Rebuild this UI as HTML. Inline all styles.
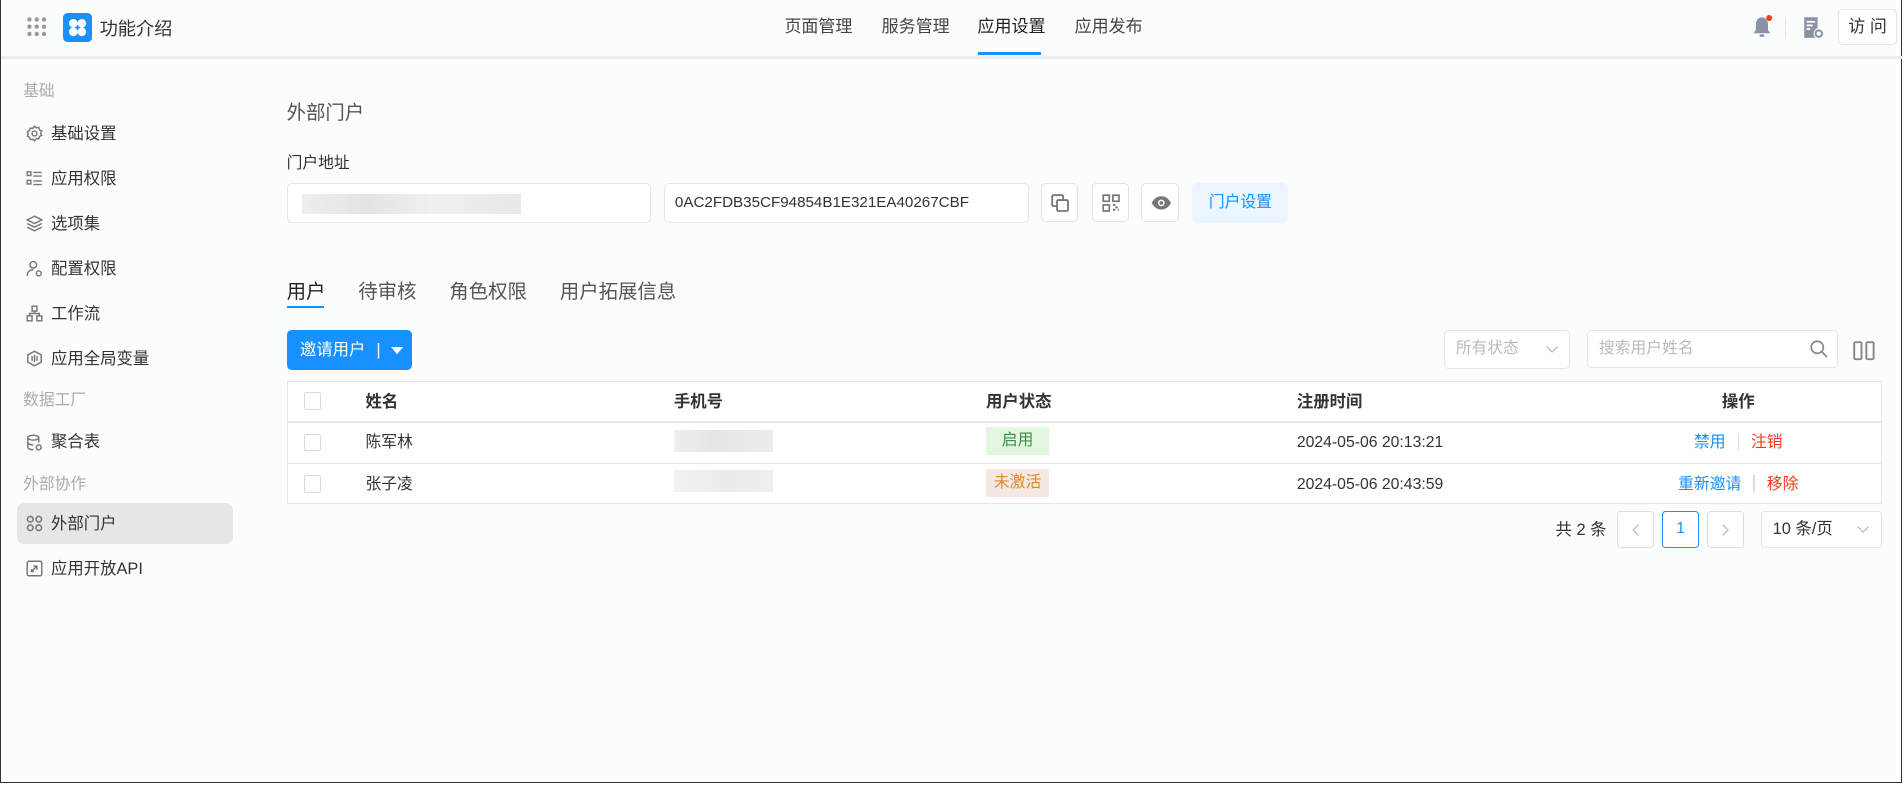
<!DOCTYPE html>
<html><head><meta charset="utf-8">
<style>
html,body{margin:0;padding:0;}
html{zoom:1.2143;}
body{width:1568px;height:646px;position:relative;overflow:hidden;background:#fbfdfd;font-family:"Liberation Sans","Noto Sans CJK SC",sans-serif;color:#333;line-height:1.34;}
.a{position:absolute;white-space:nowrap;}
.frame{position:absolute;left:0;top:0;width:1565px;height:644px;border:1px solid #333;border-top:none;}
.nav{font-size:14px;color:#444;top:13px;}
.side{font-size:13.5px;color:#333;left:42px;}
.sec{font-size:13px;color:#aaa;left:19px;}
.ico{position:absolute;left:21px;}
.ibtn{position:absolute;top:151px;width:31px;height:32px;border:1px solid #e3e3e3;border-radius:4px;background:#fff;box-sizing:border-box;}
.th{font-size:13.5px;font-weight:bold;color:#333;top:323px;}
.td{font-size:13px;color:#333;}
.cb{position:absolute;left:250px;width:13px;height:13px;border:1px solid #d9d9d9;background:#fff;border-radius:2px;}
</style></head><body>
<div class="frame"></div>
<!-- header -->
<svg class="a" style="left:22px;top:14px" width="16" height="16" viewBox="0 0 16 16" fill="#999"><circle cx="2" cy="2" r="1.8"/><circle cx="8" cy="2" r="1.8"/><circle cx="14" cy="2" r="1.8"/><circle cx="2" cy="8" r="1.8"/><circle cx="8" cy="8" r="1.8"/><circle cx="14" cy="8" r="1.8"/><circle cx="2" cy="14" r="1.8"/><circle cx="8" cy="14" r="1.8"/><circle cx="14" cy="14" r="1.8"/></svg>
<svg class="a" style="left:52px;top:11px" width="24" height="24" viewBox="0 0 24 24"><rect width="24" height="24" rx="4" fill="#1890ff"/><g fill="#fff"><ellipse cx="8.5" cy="8.5" rx="3.6" ry="3.6"/><ellipse cx="15.5" cy="8.5" rx="3.6" ry="3.6"/><ellipse cx="8.5" cy="15.5" rx="3.6" ry="3.6"/><ellipse cx="15.5" cy="15.5" rx="3.6" ry="3.6"/></g></svg>
<div class="a" style="left:82px;top:14px;font-size:15px;color:#333">功能介绍</div>
<div class="a nav" style="left:646px">页面管理</div>
<div class="a nav" style="left:726px">服务管理</div>
<div class="a nav" style="left:805px;color:#222">应用设置</div>
<div class="a" style="left:805px;top:43px;width:52px;height:2px;background:#1890ff"></div>
<div class="a nav" style="left:885px">应用发布</div>
<svg class="a" style="left:1442px;top:12px" width="18" height="20" viewBox="0 0 18 20"><path d="M9 2c-3 0-5 2.5-5 5.5v5L2 15h14l-2-2.5v-5C14 4.5 12 2 9 2z" fill="#8a93a5"/><rect x="7" y="16" width="4" height="2" rx="1" fill="#8a93a5"/><circle cx="15" cy="2.5" r="2.5" fill="#f5401c"/></svg>
<div class="a" style="left:1470px;top:14px;width:1px;height:18px;background:#e5e5e5"></div>
<svg class="a" style="left:1485px;top:13px" width="17" height="19" viewBox="0 0 17 19"><path d="M1 1h11v9a5 5 0 0 0-2 8H1z" fill="#8a93a5"/><rect x="3" y="4" width="7" height="1.5" fill="#fff"/><rect x="3" y="7" width="5" height="1.5" fill="#fff"/><rect x="3" y="10" width="3" height="1.5" fill="#fff"/><circle cx="13" cy="14.5" r="3.5" fill="#8a93a5"/><circle cx="13" cy="14.5" r="1.8" fill="#fff"/></svg>
<div class="a" style="left:1514px;top:7px;width:48px;height:30px;border:1px solid #e5e5e5;border-radius:4px;box-sizing:border-box;background:#fff;font-size:14px;text-align:center;line-height:28px;color:#333">访 问</div>
<div class="a" style="left:1px;top:46px;width:1565px;height:3px;background:#ececec"></div>
<!-- sidebar -->
<div class="a sec" style="top:67px">基础</div>
<svg class="ico" style="top:103px" width="14" height="14" viewBox="0 0 14 14" fill="none" stroke="#777" stroke-width="1.2"><circle cx="7" cy="7" r="2"/><path d="M7 1l1.5 1.3 2-.3.6 1.9 1.8 1-.8 1.8.8 1.8-1.8 1-.6 1.9-2-.3L7 13l-1.5-1.3-2 .3-.6-1.9-1.8-1 .8-1.8-.8-1.8 1.8-1 .6-1.9 2 .3z"/></svg>
<div class="a side" style="top:102px">基础设置</div>
<svg class="ico" style="top:140px" width="14" height="14" viewBox="0 0 14 14" fill="none" stroke="#777" stroke-width="1.2"><rect x="1" y="1.5" width="3" height="3"/><rect x="1" y="8.5" width="3" height="3"/><path d="M6 2h7M6 5h7M6 9h7M6 12h7"/></svg>
<div class="a side" style="top:139px">应用权限</div>
<svg class="ico" style="top:177px" width="14" height="14" viewBox="0 0 14 14" fill="none" stroke="#777" stroke-width="1.2"><path d="M7 1L1 4l6 3 6-3z M1 7l6 3 6-3 M1 10l6 3 6-3"/></svg>
<div class="a side" style="top:176px">选项集</div>
<svg class="ico" style="top:214px" width="14" height="14" viewBox="0 0 14 14" fill="none" stroke="#777" stroke-width="1.2"><circle cx="6" cy="4" r="2.7"/><path d="M1 13c0-3 2-5 5-5"/><circle cx="10.5" cy="11" r="2"/></svg>
<div class="a side" style="top:213px">配置权限</div>
<svg class="ico" style="top:251px" width="14" height="14" viewBox="0 0 14 14" fill="none" stroke="#777" stroke-width="1.2"><rect x="5" y="1" width="4" height="4"/><rect x="1" y="9" width="4" height="4"/><rect x="9" y="9" width="4" height="4"/><path d="M7 5v2M3 9V7h8v2"/></svg>
<div class="a side" style="top:250px">工作流</div>
<svg class="ico" style="top:288px" width="14" height="14" viewBox="0 0 14 14" fill="none" stroke="#777" stroke-width="1.2"><path d="M7 1l5.5 3v6L7 13 1.5 10V4z"/><path d="M5 5v4M7 4v6M9 5v4"/></svg>
<div class="a side" style="top:287px">应用全局变量</div>
<div class="a sec" style="top:321px">数据工厂</div>
<svg class="ico" style="top:357px" width="14" height="14" viewBox="0 0 14 14" fill="none" stroke="#777" stroke-width="1.2"><ellipse cx="6" cy="3" rx="4.5" ry="2"/><path d="M1.5 3v8c0 1 2 2 4.5 2M10.5 3v4M1.5 7c0 1 2 2 4.5 2"/><circle cx="10.5" cy="11" r="2"/></svg>
<div class="a side" style="top:356px">聚合表</div>
<div class="a sec" style="top:390px">外部协作</div>
<div class="a" style="left:14px;top:414px;width:178px;height:34px;background:#e6e6e6;border-radius:6px"></div>
<svg class="ico" style="top:424px" width="14" height="14" viewBox="0 0 14 14" fill="none" stroke="#777" stroke-width="1.3"><circle cx="3.5" cy="3.5" r="2.3"/><circle cx="10.5" cy="3.5" r="2.3"/><circle cx="3.5" cy="10.5" r="2.3"/><circle cx="10.5" cy="10.5" r="2.3"/></svg>
<div class="a side" style="top:423px">外部门户</div>
<svg class="ico" style="top:461px" width="14" height="14" viewBox="0 0 14 14" fill="none" stroke="#777" stroke-width="1.2"><rect x="1" y="1" width="12" height="12" rx="1.5"/><path d="M5 9l4-4M6 5h3v3M4.5 7.5v2h2"/></svg>
<div class="a side" style="top:460px">应用开放API</div>
<!-- main -->
<div class="a" style="left:236px;top:82px;font-size:16px;color:#555">外部门户</div>
<div class="a" style="left:236px;top:126px;font-size:13px;color:#333">门户地址</div>
<div class="a" style="left:236px;top:151px;width:300px;height:33px;border:1px solid #e6e6e6;border-radius:4px;box-sizing:border-box;background:#fff"></div>
<div class="a" style="left:249px;top:160px;width:180px;height:16px;background:linear-gradient(90deg,#eee,#e4e4e4 30%,#f0f0f0 60%,#e8e8e8)"></div>
<div class="a" style="left:547px;top:151px;width:300px;height:33px;border:1px solid #e6e6e6;border-radius:4px;box-sizing:border-box;background:#fff;font-size:12.5px;line-height:31px;padding-left:8px;color:#333">0AC2FDB35CF94854B1E321EA40267CBF</div>
<div class="ibtn" style="left:857px"><svg style="position:absolute;left:8px;top:8px" width="15" height="15" viewBox="0 0 15 15" fill="none" stroke="#777" stroke-width="1.5"><rect x="1" y="1" width="9" height="9" rx="1"/><rect x="5" y="5" width="9" height="9" rx="1" fill="#fff"/></svg></div>
<div class="ibtn" style="left:899px"><svg style="position:absolute;left:8px;top:8px" width="15" height="15" viewBox="0 0 15 15" fill="none" stroke="#777" stroke-width="1.4"><rect x="1" y="1" width="5" height="5"/><rect x="9" y="1" width="5" height="5"/><rect x="1" y="9" width="5" height="5"/><path d="M9 9h2M13 9v0M11 11h2M9 13h2M13 13h1" stroke-width="1.6"/></svg></div>
<div class="ibtn" style="left:940px"><svg style="position:absolute;left:7px;top:9px" width="17" height="13" viewBox="0 0 17 13"><path d="M0.5 6.5C3 2 6 1 8.5 1s5.5 1 8 5.5c-2.5 4.5-5.5 5.5-8 5.5s-5.5-1-8-5.5z" fill="#777"/><circle cx="8.5" cy="6.5" r="2.8" fill="#fff"/><circle cx="8.5" cy="6.5" r="1.5" fill="#777"/></svg></div>
<div class="a" style="left:982px;top:151px;width:79px;height:33px;background:#eaf5ff;border-radius:4px;color:#1890ff;font-size:13px;text-align:center;line-height:33px">门户设置</div>
<!-- tabs -->
<div class="a" style="left:236px;top:230px;font-size:16px;color:#222">用户</div>
<div class="a" style="left:236px;top:252px;width:31px;height:2px;background:#1890ff"></div>
<div class="a" style="left:295px;top:230px;font-size:16px;color:#555">待审核</div>
<div class="a" style="left:370px;top:230px;font-size:16px;color:#555">角色权限</div>
<div class="a" style="left:461px;top:230px;font-size:16px;color:#555">用户拓展信息</div>
<!-- toolbar -->
<div class="a" style="left:236px;top:272px;width:103px;height:33px;background:#1890ff;border-radius:4px;color:#fff;font-size:13.5px;line-height:33px"><span style="margin-left:11px">邀请用户</span><span style="margin-left:9px">|</span><svg style="position:absolute;left:86px;top:14px" width="10" height="6" viewBox="0 0 10 6"><path d="M0 0h10L5 6z" fill="#fff"/></svg></div>
<div class="a" style="left:1189px;top:272px;width:104px;height:32px;border:1px solid #e6e6e6;border-radius:4px;box-sizing:border-box;background:#fff;font-size:13px;color:#bbb;line-height:30px;padding-left:9px">所有状态<svg style="position:absolute;right:9px;top:12px" width="10" height="6" viewBox="0 0 10 6" fill="none" stroke="#bbb"><path d="M0.5 0.5L5 5l4.5-4.5"/></svg></div>
<div class="a" style="left:1307px;top:272px;width:207px;height:31px;border:1px solid #e6e6e6;border-radius:4px;box-sizing:border-box;background:#fff;font-size:13px;color:#bbb;line-height:29px;padding-left:9px">搜索用户姓名<svg style="position:absolute;right:8px;top:7px" width="15" height="15" viewBox="0 0 15 15" fill="none" stroke="#888" stroke-width="1.4"><circle cx="6" cy="6" r="5"/><path d="M9.5 9.5L14 14"/></svg></div>
<svg class="a" style="left:1526px;top:281px" width="18" height="16" viewBox="0 0 18 16" fill="none" stroke="#888" stroke-width="1.6"><rect x="1" y="1" width="6" height="14" rx="1"/><rect x="11" y="1" width="6" height="14" rx="1"/></svg>
<!-- table -->
<div class="a" style="left:236px;top:314px;width:1314px;height:101px;border:1px solid #e6e6e6;box-sizing:border-box;background:#fff"></div>
<div class="a" style="left:237px;top:347px;width:1312px;height:1px;background:#e8e8e8"></div>
<div class="a" style="left:237px;top:381px;width:1312px;height:1px;background:#e8e8e8"></div>
<div class="cb" style="top:323px"></div>
<div class="cb" style="top:357px"></div>
<div class="cb" style="top:391px"></div>
<div class="a th" style="left:301px">姓名</div>
<div class="a th" style="left:555px">手机号</div>
<div class="a th" style="left:812px">用户状态</div>
<div class="a th" style="left:1068px">注册时间</div>
<div class="a th" style="left:1418px">操作</div>
<div class="a td" style="left:301px;top:356px">陈军林</div>
<div class="a td" style="left:301px;top:390px">张子凌</div>
<div class="a" style="left:555px;top:354px;width:82px;height:18px;background:linear-gradient(90deg,#eee,#e6e6e8 40%,#ececec)"></div>
<div class="a" style="left:555px;top:387px;width:82px;height:18px;background:linear-gradient(90deg,#f2f2f2,#ececec 50%,#eee)"></div>
<div class="a" style="left:812px;top:352px;width:52px;height:23px;background:#e3f7e0;color:#3c8c4b;font-size:13px;text-align:center;line-height:23px">启用</div>
<div class="a" style="left:812px;top:386px;width:52px;height:23px;background:#f3e9e2;color:#e3862d;font-size:13px;text-align:center;line-height:23px">未激活</div>
<div class="a td" style="left:1068px;top:356px">2024-05-06 20:13:21</div>
<div class="a td" style="left:1068px;top:390px">2024-05-06 20:43:59</div>
<div class="a td" style="left:1395px;top:356px;color:#1890ff">禁用</div>
<div class="a" style="left:1431px;top:357px;width:1px;height:14px;background:#ddd"></div>
<div class="a td" style="left:1442px;top:356px;color:#f23c1e">注销</div>
<div class="a td" style="left:1382px;top:390px;color:#1890ff">重新邀请</div>
<div class="a" style="left:1444px;top:391px;width:1px;height:14px;background:#ddd"></div>
<div class="a td" style="left:1455px;top:390px;color:#f23c1e">移除</div>
<!-- pagination -->
<div class="a" style="left:1281px;top:428px;font-size:13.5px;color:#333">共 2 条</div>
<div class="a" style="left:1332px;top:421px;width:30px;height:30px;border:1px solid #ddd;border-radius:3px;box-sizing:border-box;background:#fff"><svg style="position:absolute;left:11px;top:10px" width="6" height="10" viewBox="0 0 6 10" fill="none" stroke="#bbb"><path d="M5.5 0.5L1 5l4.5 4.5"/></svg></div>
<div class="a" style="left:1369px;top:421px;width:30px;height:30px;border:1px solid #1890ff;border-radius:3px;box-sizing:border-box;background:#fff;color:#1890ff;font-size:13px;text-align:center;line-height:28px">1</div>
<div class="a" style="left:1406px;top:421px;width:30px;height:30px;border:1px solid #ddd;border-radius:3px;box-sizing:border-box;background:#fff"><svg style="position:absolute;left:11px;top:10px" width="6" height="10" viewBox="0 0 6 10" fill="none" stroke="#bbb"><path d="M0.5 0.5L5 5 0.5 9.5"/></svg></div>
<div class="a" style="left:1450px;top:421px;width:100px;height:30px;border:1px solid #e3e3e3;border-radius:3px;box-sizing:border-box;background:#fff;font-size:13.5px;color:#333;line-height:28px;padding-left:9px">10 条/页<svg style="position:absolute;right:10px;top:11px" width="10" height="6" viewBox="0 0 10 6" fill="none" stroke="#bbb"><path d="M0.5 0.5L5 5l4.5-4.5"/></svg></div>
</body></html>
